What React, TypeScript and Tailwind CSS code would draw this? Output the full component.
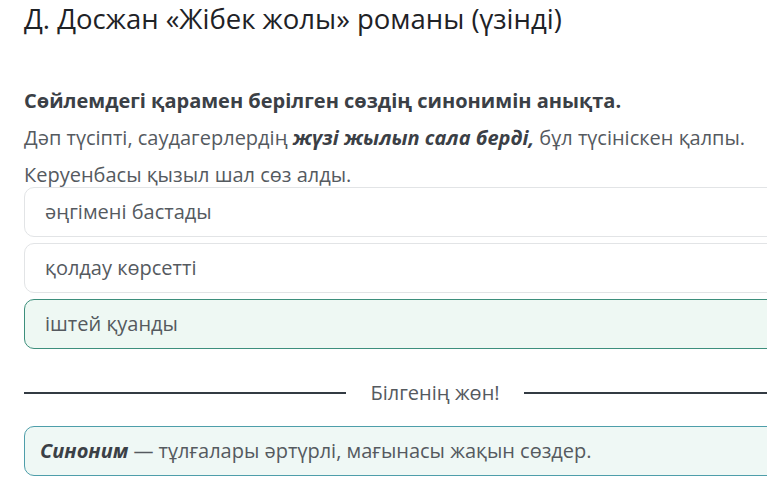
export default function App() {
  const font = { fontFamily: '"Open Sans", "Noto Sans", sans-serif' };
  return (
    <div className="w-[767px] h-[501px] overflow-hidden bg-white" style={font}>
      <div className="w-[822px] ml-[24px]">
        <h1 className="text-[27.5px] leading-[36px] text-[#1e2226] mt-[1px]">
          Д. Досжан «Жібек жолы» романы (үзінді)
        </h1>
        <p className="mt-[51px] text-[20px] leading-[26px] font-bold text-[#3b4046]">
          Сөйлемдегі қарамен берілген сөздің синонимін анықта.
        </p>
        <p className="mt-[11px] text-[20px] leading-[26px] text-[#555a5f]">
          Дәп түсіпті, саудагерлердің <b className="italic text-[#3b4046]">жүзі жылып сала берді,</b> бұл түсініскен қалпы.
        </p>
        <p className="mt-[11px] text-[20px] leading-[26px] text-[#555a5f]">
          Керуенбасы қызыл шал сөз алды.
        </p>
        <div className="flex flex-col gap-[6px] mt-[-1px]">
          <div className="h-[50px] rounded-[10px] border border-[#e2e4e6] flex items-center px-[20px] text-[20px] text-[#555a5f]">
            әңгімені бастады
          </div>
          <div className="h-[50px] rounded-[10px] border border-[#e2e4e6] flex items-center px-[20px] text-[20px] text-[#555a5f]">
            қолдау көрсетті
          </div>
          <div className="h-[50px] rounded-[10px] border border-[#3d8f7c] bg-[#eef8f3] flex items-center px-[20px] text-[20px] text-[#555a5f]">
            іштей қуанды
          </div>
        </div>
        <div className="flex items-center mt-[31px] h-[26px]">
          <div className="flex-1 h-[2px] bg-[#333b43]"></div>
          <div className="px-[24px] text-[20px] text-[#555a5f]">Білгенің жөн!</div>
          <div className="flex-1 h-[2px] bg-[#333b43]"></div>
        </div>
        <div className="mt-[20px] h-[50px] rounded-[10px] border border-[#4e9eaa] bg-[#eff8f5] flex items-center px-[15px] text-[20px] text-[#555a5f]">
          <span><b className="italic text-[#3b4046]">Синоним</b> — тұлғалары әртүрлі, мағынасы жақын сөздер.</span>
        </div>
      </div>
    </div>
  );
}
